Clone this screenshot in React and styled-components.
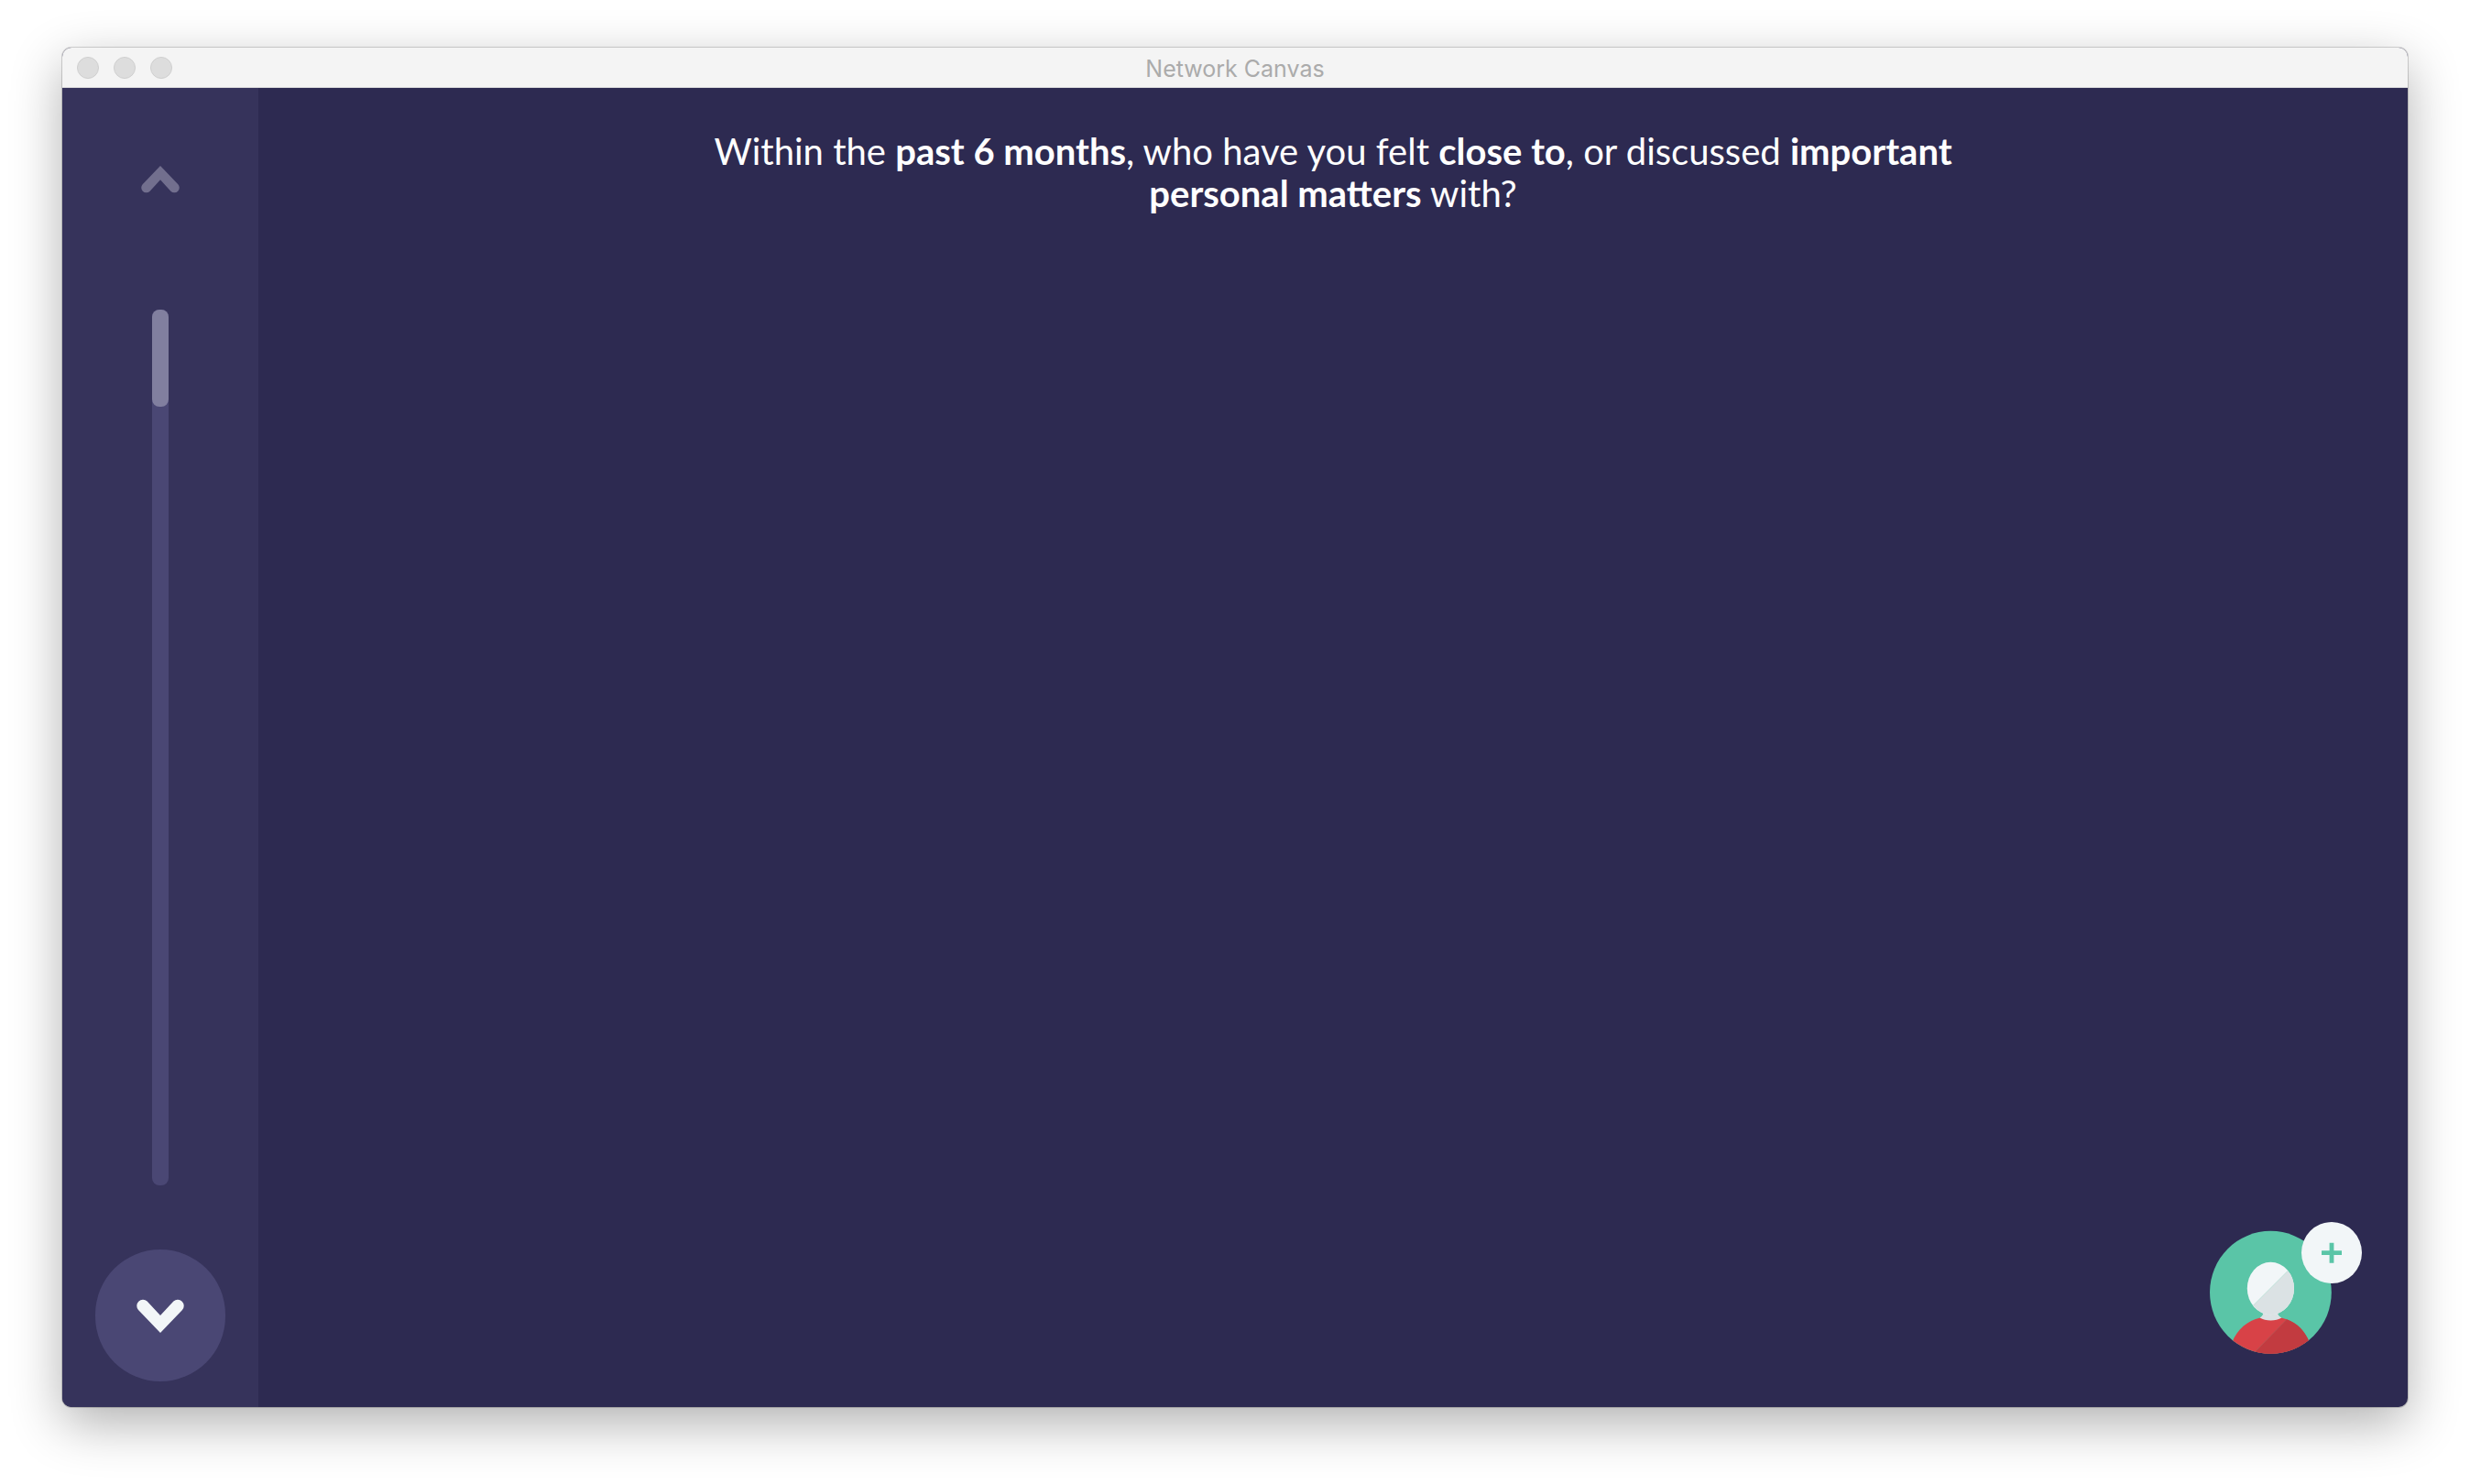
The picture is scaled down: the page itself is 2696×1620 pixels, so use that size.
import React from "react";
import styled, { createGlobalStyle } from "styled-components";

const GlobalStyle = createGlobalStyle`
  *, *::before, *::after { box-sizing: border-box; }
  body { margin: 0; background: #ffffff; }
`;

const Desktop = styled.div`
  display: flex;
  min-height: 100vh;
  padding: 52px 68px 84px;
`;

const Window = styled.div`
  flex: 1;
  display: flex;
  flex-direction: column;
  border-radius: 10px;
  overflow: hidden;
  background: #2d2a51;
  box-shadow:
    0 0 0 1px rgba(0, 0, 0, 0.16),
    0 18px 56px rgba(0, 0, 0, 0.31);
`;

const TitleBar = styled.header`
  display: grid;
  grid-template-columns: 1fr auto 1fr;
  align-items: center;
  height: 44px;
  padding: 0 16px;
  background: #f4f4f4;
  border-bottom: 1px solid #d8d8da;
`;

const Lights = styled.div`
  display: flex;
  gap: 16px;
`;

const Light = styled.button`
  width: 24px;
  height: 24px;
  padding: 0;
  border: 1px solid #cfcfcf;
  border-radius: 50%;
  background: #dddddd;
`;

const Title = styled.h1`
  margin: 0;
  padding-top: 2px;
  font: 400 25px/32px Inter, "Liberation Sans", sans-serif;
  color: #ababab;
`;

const Body = styled.div`
  flex: 1;
  display: flex;
`;

const Sidebar = styled.nav`
  display: flex;
  flex-direction: column;
  align-items: center;
  gap: 70px;
  width: 214px;
  padding: 28px 36px;
  background: #36335b;
`;

const NavButton = styled.button`
  display: flex;
  align-items: center;
  justify-content: center;
  width: 142px;
  height: 144px;
  padding: 0;
  border: 0;
  border-radius: 72px;
  background: ${(p) => (p.$active ? "#4a4774" : "transparent")};
  color: ${(p) => (p.$active ? "#f2f6f8" : "#726f8e")};
`;

const Track = styled.div`
  flex: 1;
  width: 18px;
  border-radius: 8px;
  background: #4a4774;
`;

const Progress = styled.div`
  border-radius: 8px;
  background: #817f9f;
`;

const Stage = styled.main`
  flex: 1;
  display: flex;
  flex-direction: column;
  justify-content: space-between;
  padding: 46px 50px 58px;
`;

const Prompt = styled.p`
  align-self: center;
  max-width: 1480px;
  margin: 0;
  font: 400 40px/46px Lato, "Open Sans", sans-serif;
  text-align: center;
  color: #ffffff;
`;

const AddPerson = styled.button`
  align-self: flex-end;
  display: flex;
  padding: 0;
  border: 0;
  background: none;
`;

function Chevron({ up, width }) {
  return (
    <svg width={width} height={(width * 37) / 52} viewBox="0 0 52 37" fill="currentColor" aria-hidden="true">
      <path
        transform={up ? "rotate(180 26 18.5)" : undefined}
        d="M11.6 2.4 26 18 40.4 2.4A6.8 6.8 0 0 1 50 12L26 37 2 12A6.8 6.8 0 0 1 11.6 2.4Z"
      />
    </svg>
  );
}

function PersonIcon() {
  return (
    <svg width="166" height="144" viewBox="0 0 166 144" aria-hidden="true">
      <defs>
        <clipPath id="disc">
          <ellipse cx="66.4" cy="76.8" rx="66.4" ry="67" />
        </clipPath>
        <clipPath id="head">
          <ellipse cx="66.4" cy="72.5" rx="25.6" ry="28.7" />
        </clipPath>
      </defs>
      <ellipse cx="66.4" cy="76.8" rx="66.4" ry="67" fill="#5ac5a7" />
      <g clipPath="url(#disc)">
        <path d="M24 132C30 117 41 108 55 104.6H78C92 108 103 117 109 132V144H24Z" fill="#d84247" />
        <path d="M84 106.3C95 110 104 119 109 132V144H48V143.5Z" fill="#c23b40" />
        <path d="M84 106.3 48 143" stroke="#a8605c" strokeWidth="0.6" />
      </g>
      <path d="M58 97C59 101 57 103 54.5 104.6 61 108.6 72 108.6 78.5 104.6 75.5 103 73.5 101 74.5 97Z" fill="#dbe2e4" />
      <g clipPath="url(#head)">
        <rect x="40" y="43" width="53" height="59" fill="#f2f6f8" />
        <path d="M86 52.5 46 92.5V104H94V52Z" fill="#dbe2e4" />
        <path d="M86 52.5 46 92.5" stroke="#b9dfd5" strokeWidth="0.8" />
      </g>
      <ellipse cx="133" cy="33.5" rx="33" ry="33.5" fill="#f2f6f8" />
      <path d="M133 22.7V44.7M122 33.7H144" stroke="#5ac5a7" strokeWidth="4.8" />
    </svg>
  );
}

const step = 1;
const steps = 9;

export default function App() {
  return (
    <>
      <GlobalStyle />
      <Desktop>
        <Window>
          <TitleBar>
            <Lights>
              <Light aria-label="Close" />
              <Light aria-label="Minimize" />
              <Light aria-label="Zoom" />
            </Lights>
            <Title>Network Canvas</Title>
          </TitleBar>
          <Body>
            <Sidebar>
              <NavButton aria-label="Previous">
                <Chevron up width={42} />
              </NavButton>
              <Track role="progressbar" aria-label="Progress" aria-valuemin={0} aria-valuemax={steps} aria-valuenow={step}>
                <Progress style={{ height: `${(step / steps) * 100}%` }} />
              </Track>
              <NavButton $active aria-label="Next">
                <Chevron width={52} />
              </NavButton>
            </Sidebar>
            <Stage>
              <Prompt>
                Within the <strong>past 6 months</strong>, who have you felt <strong>close to</strong>, or discussed{" "}
                <strong>important personal matters</strong> with?
              </Prompt>
              <AddPerson aria-label="Add a person">
                <PersonIcon />
              </AddPerson>
            </Stage>
          </Body>
        </Window>
      </Desktop>
    </>
  );
}
